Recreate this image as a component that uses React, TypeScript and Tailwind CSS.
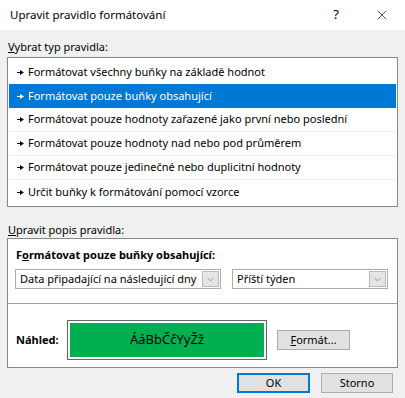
import { X, ChevronDown } from 'lucide-react'

const rules = [
  'Formátovat všechny buňky na základě hodnot',
  'Formátovat pouze buňky obsahující',
  'Formátovat pouze hodnoty zařazené jako první nebo poslední',
  'Formátovat pouze hodnoty nad nebo pod průměrem',
  'Formátovat pouze jedinečné nebo duplicitní hodnoty',
  'Určit buňky k formátování pomocí vzorce',
]

// little arrow in front of every rule
function Pointer({ light }: { light: boolean }) {
  return (
    <svg width="7" height="5" viewBox="0 0 7 5" className="shrink-0">
      <path d="M0 2h3.5v1H0z M3 0 L7 2.5 L3 5z" fill={light ? '#ffffff' : '#000000'} />
    </svg>
  )
}

function Select({ value, width }: { value: string; width: string }) {
  return (
    <div className={`${width} h-[20px] flex items-center border border-[#adadad] bg-white pl-[4px] pr-[1px]`}>
      <span className="flex-1 whitespace-nowrap overflow-hidden">{value}</span>
      <div className="w-[17px] h-[16px] flex items-center justify-center bg-[#e5e5e5] border border-[#b9b9b9]">
        <ChevronDown size={11} strokeWidth={1.2} color="#555" />
      </div>
    </div>
  )
}

export default function App() {
  const selected = 1

  return (
    <div className="w-[405px] h-[398px] flex flex-col bg-[#f0f0f0] text-[11px] text-black overflow-hidden" style={{ fontFamily: '"Noto Sans", "Open Sans", sans-serif' }}>
      {/* title bar */}
      <div className="h-[30px] shrink-0 bg-white flex items-center pl-[10px] text-[11.5px]">
        <span className="flex-1">Upravit pravidlo formátování</span>
        <span className="w-[46px] text-center text-[13px]">?</span>
        <span className="w-[46px] flex justify-center">
          <X size={16} strokeWidth={1} />
        </span>
      </div>

      <div className="flex flex-col px-[7px] pt-[9px]">
        <div className="h-[16px] flex items-center pl-px">
          <span><u>V</u>ybrat typ pravidla:</span>
        </div>

        <div className="mt-[2px] h-[150px] border border-[#828790] bg-white p-px pt-[2px] flex flex-col">
          {rules.map((r, i) => (
            <div
              key={r}
              className={`h-[24px] shrink-0 flex items-center gap-[4px] pl-[8px] ${i === selected ? 'bg-[#0078d7] text-white' : ''} ${i < rules.length - 1 && i !== selected && i + 1 !== selected ? 'border-b border-[#f0f0f0]' : ''}`}
            >
              <Pointer light={i === selected} />
              <span>{r}</span>
            </div>
          ))}
        </div>

        <div className="mt-[15px] h-[16px] flex items-center pl-px">
          <span><u>U</u>pravit popis pravidla:</span>
        </div>

        <div className="h-[130px] border border-[#828790] bg-white flex flex-col">
          <div className="pt-[8px] pl-[8px] h-[24px] font-bold flex items-center">
            <span>F<u>o</u>rmátovat pouze buňky obsahující:</span>
          </div>
          <div className="mt-[6px] flex gap-[11px] pl-[7px]">
            <Select value="Data připadající na následující dny" width="w-[206px]" />
            <Select value="Příští týden" width="w-[156px]" />
          </div>
          <div className="mt-[14px] border-t border-[#a0a0a0]" />
          <div className="flex items-center mt-[16px] pl-[8px]">
            <span className="w-[51px] font-bold">Náhled:</span>
            <div className="w-[200px] h-[40px] border border-[#646464] p-[2px]">
              <div className="h-full bg-[#00b050] flex items-center justify-center text-[13px]">ÁáBbČčYyŽž</div>
            </div>
            <button className="ml-[10px] w-[73px] h-[20px] bg-[#e1e1e1] border border-[#adadad] flex items-center justify-center">
              <span><u>F</u>ormát...</span>
            </button>
          </div>
        </div>

        <div className="mt-[5px] flex justify-end gap-[11px] pr-[5px]">
          <button className="w-[73px] h-[20px] bg-[#e1e1e1] border-2 border-[#0078d7] flex items-center justify-center">OK</button>
          <button className="w-[72px] h-[20px] bg-[#e1e1e1] border border-[#adadad] flex items-center justify-center">Storno</button>
        </div>
      </div>
    </div>
  )
}
